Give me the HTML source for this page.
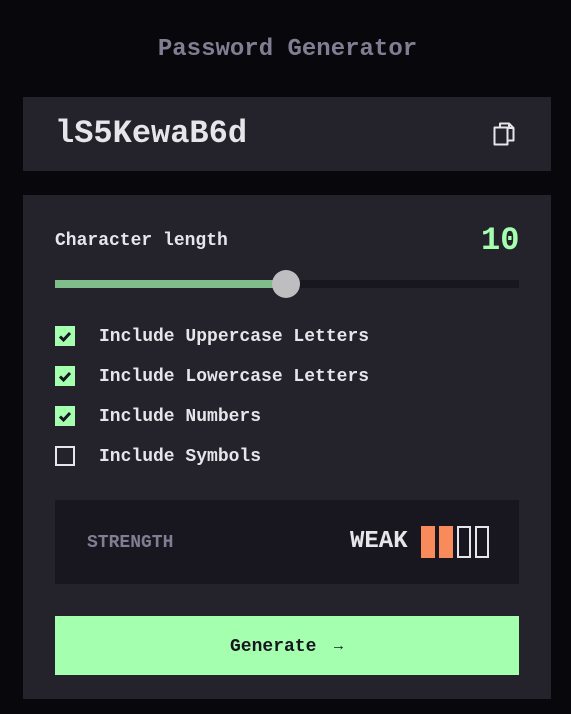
<!DOCTYPE html>
<html><head><style>
*{margin:0;padding:0;box-sizing:border-box}
body{width:571px;height:714px;background:#08070b;font-family:"Liberation Mono",monospace;font-weight:bold;position:relative;overflow:hidden}
.a{position:absolute;white-space:nowrap}
.cb{position:absolute;left:55px;width:20px;height:20px}
.on{background:#a4ffaf}
.off{border:2px solid #e6e5ea}
.lbl{position:absolute;left:99px;font-size:18px;color:#e6e5ea;line-height:20px;margin-top:1px}
.bar{position:absolute;top:526px;width:14px;height:32px}
</style></head><body>
<div class="a" style="left:2px;width:571px;text-align:center;top:36px;font-size:24px;color:#817d92;font-weight:bold">Password Generator</div>
<div class="a" style="left:23px;top:97px;width:528px;height:74px;background:#24232c"></div>
<div class="a" style="left:55px;top:114px;font-size:32px;line-height:40px;color:#e6e5ea">lS5KewaB6d</div>
<svg class="a" style="left:493px;top:122px" width="22" height="24" viewBox="0 0 22 24"><path d="M7 5V1.5h9l4.5 4.5v12.5H15.5M16 1.5V6h4.5M1.5 5.5h13v17h-13z" fill="none" stroke="#e6e5ea" stroke-width="2" stroke-linejoin="round"/></svg>
<div class="a" style="left:23px;top:195px;width:528px;height:504px;background:#24232c"></div>
<div class="a" style="left:55px;top:230px;font-size:18px;line-height:22px;color:#e6e5ea">Character length</div>
<div class="a" style="left:481px;top:223px;font-size:32px;line-height:36px;color:#a4ffaf">10</div>
<div class="a" style="left:55px;top:280px;width:464px;height:8px;background:#18171f"></div>
<div class="a" style="left:55px;top:280px;width:231px;height:8px;background:#7fbd8a"></div>
<div class="a" style="left:272px;top:270px;width:28px;height:28px;border-radius:50%;background:#bebec0"></div>
<div class="cb on" style="top:326px"><svg width="20" height="20"><path d="M5 10.5l3.5 3.5 6.5-7" fill="none" stroke="#18171f" stroke-width="3"/></svg></div>
<div class="lbl" style="top:326px">Include Uppercase Letters</div>
<div class="cb on" style="top:366px"><svg width="20" height="20"><path d="M5 10.5l3.5 3.5 6.5-7" fill="none" stroke="#18171f" stroke-width="3"/></svg></div>
<div class="lbl" style="top:366px">Include Lowercase Letters</div>
<div class="cb on" style="top:406px"><svg width="20" height="20"><path d="M5 10.5l3.5 3.5 6.5-7" fill="none" stroke="#18171f" stroke-width="3"/></svg></div>
<div class="lbl" style="top:406px">Include Numbers</div>
<div class="cb off" style="top:446px"></div>
<div class="lbl" style="top:446px">Include Symbols</div>
<div class="a" style="left:55px;top:500px;width:464px;height:84px;background:#18171f"></div>
<div class="a" style="left:87px;top:532px;font-size:18px;line-height:22px;color:#817d92">STRENGTH</div>
<div class="a" style="left:350px;top:528px;font-size:24px;line-height:28px;color:#e6e5ea">WEAK</div>
<div class="bar" style="left:421px;background:#f98a5c"></div>
<div class="bar" style="left:439px;background:#f98a5c"></div>
<div class="bar" style="left:457px;border:2px solid #e6e5ea"></div>
<div class="bar" style="left:475px;border:2px solid #e6e5ea"></div>
<div class="a" style="left:55px;top:616px;width:464px;height:59px;background:#a4ffaf"></div>
<div class="a" style="left:230px;top:636px;font-size:18px;line-height:22px;color:#18171f">Generate</div>
<div class="a" style="left:334px;top:637px;font-size:15px;line-height:20px;color:#18171f">→</div>
</body></html>
